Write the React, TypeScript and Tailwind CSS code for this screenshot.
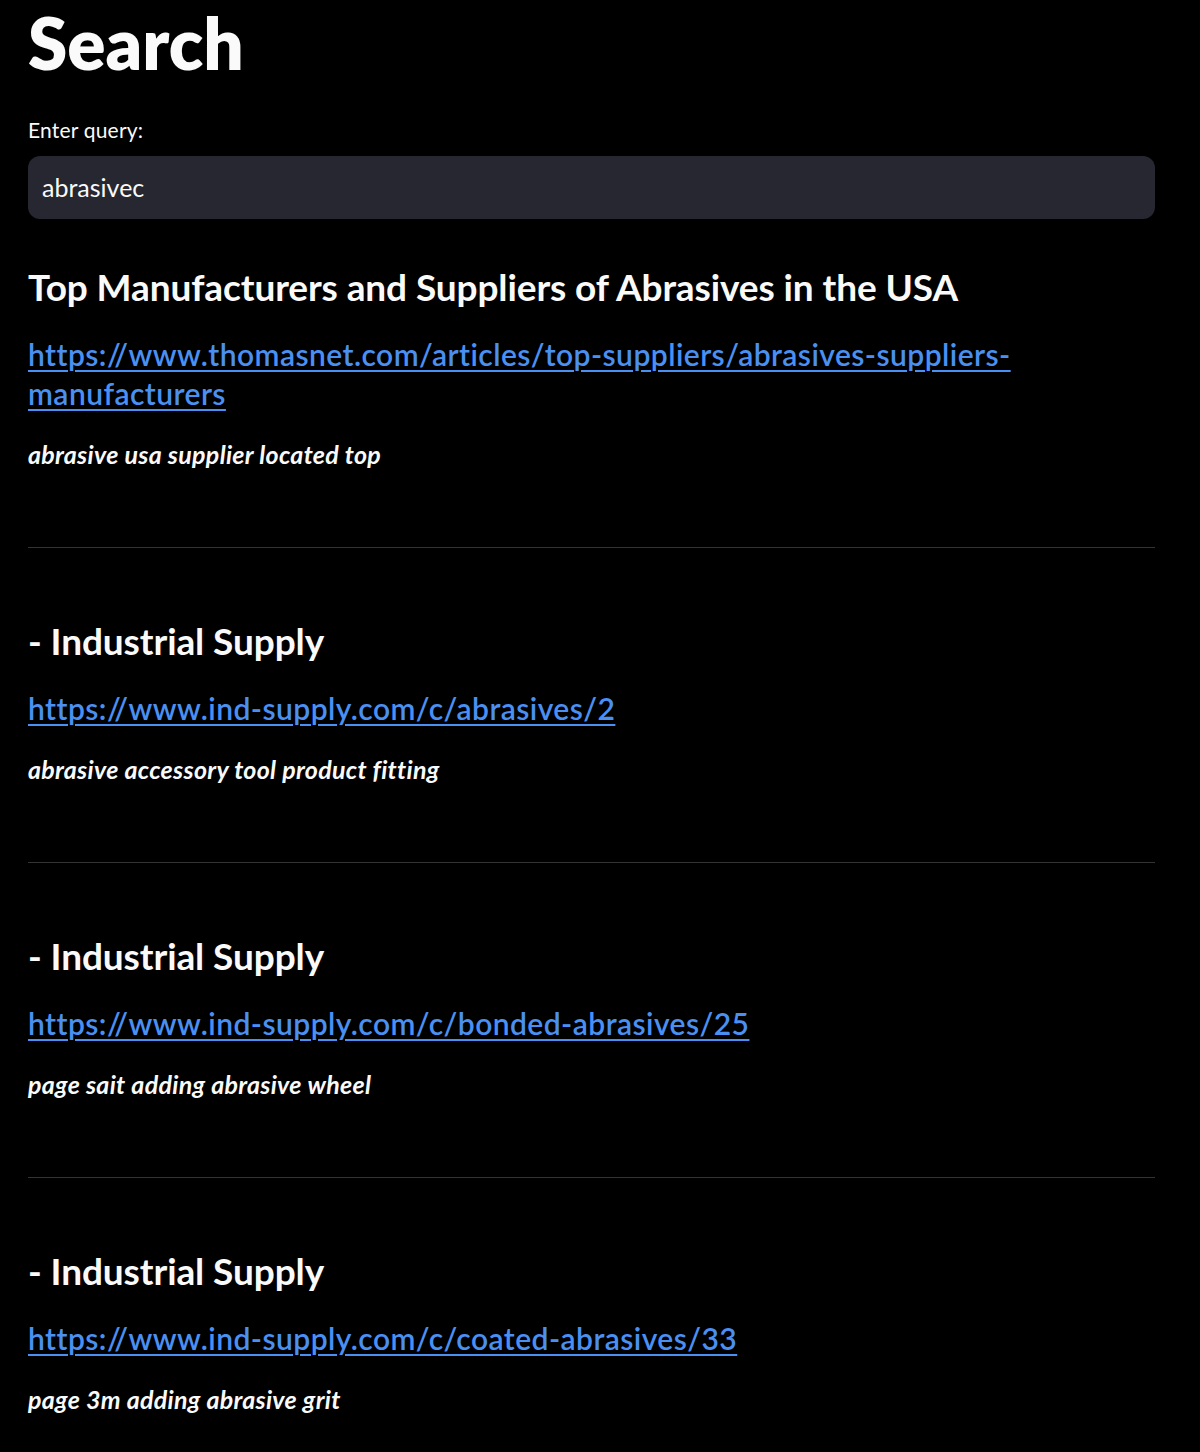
import React from "react";

const items = [
  {
    title: "Top Manufacturers and Suppliers of Abrasives in the USA",
    url: "https://www.thomasnet.com/articles/top-suppliers/abrasives-suppliers-manufacturers",
    kw: "abrasive usa supplier located top",
  },
  {
    title: "- Industrial Supply",
    url: "https://www.ind-supply.com/c/abrasives/2",
    kw: "abrasive accessory tool product fitting",
  },
  {
    title: "- Industrial Supply",
    url: "https://www.ind-supply.com/c/bonded-abrasives/25",
    kw: "page sait adding abrasive wheel",
  },
  {
    title: "- Industrial Supply",
    url: "https://www.ind-supply.com/c/coated-abrasives/33",
    kw: "page 3m adding abrasive grit",
  },
];

export default function App() {
  return (
    <div
      className="min-h-[1452px] w-full bg-black text-[#fafafa]"
      style={{ fontFamily: "Lato, 'Noto Sans', sans-serif" }}
    >
      <div className="ml-[28px] w-[1127px] pt-[3px]">
        <h1 className="text-[71px] leading-[80px] font-extrabold">Search</h1>
        <div className="mt-[35px] text-[21px] leading-[24px] tracking-[0.2px]">Enter query:</div>
        <div className="mt-[14px] flex h-[63px] items-center rounded-[12px] bg-[#262730] px-[14px] text-[25px]">
          abrasivec
        </div>
        <div className="mt-[44px]">
          {items.map((it, i) => (
            <div key={i}>
              {i > 0 && <div className="mt-[69px]" />}
              <h3 className="text-[37px] leading-[48px] font-bold tracking-[-0.1px]">{it.title}</h3>
              <a
                href="#"
                className="mt-[24px] block text-[30px] leading-[39px] font-semibold tracking-[0.45px] text-[#4a90f2] underline decoration-2 underline-offset-[4px]"
              >
                {it.url}
              </a>
              <div className="mt-[26px] text-[25px] leading-[30px] italic font-bold tracking-[0.3px]">
                {it.kw}
              </div>
              {i < items.length - 1 && (
                <hr className="mt-[78px] border-0 border-t border-[#333333]" />
              )}
            </div>
          ))}
        </div>
      </div>
    </div>
  );
}
